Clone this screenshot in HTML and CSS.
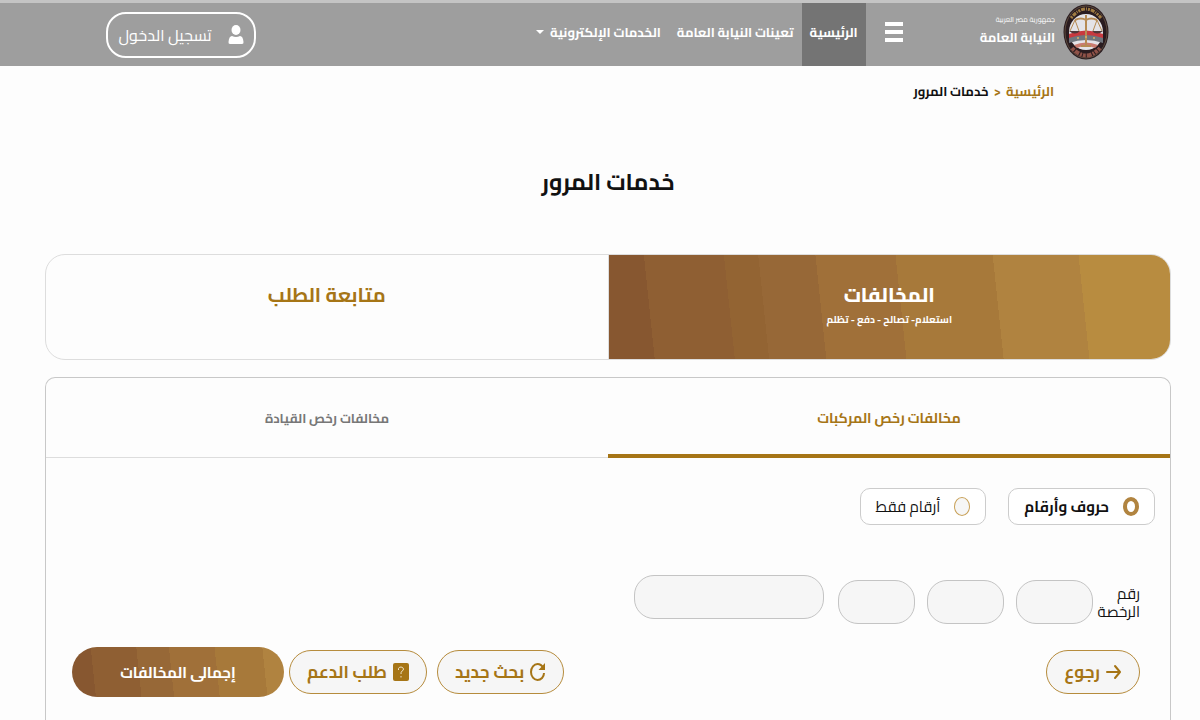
FILE: index.html
```html
<!DOCTYPE html>
<html lang="ar" dir="rtl">
<head>
	<meta charset="utf-8">
	<title>خدمات المرور</title>
	<link rel="stylesheet" href="styles.css">
</head>
<body>
	<!-- Header -->
	<header class="header">
		<a class="brand" href="#">
			<svg class="logo" viewBox="0 0 46 56" aria-hidden="true">
				<ellipse cx="23" cy="28" rx="22.5" ry="27.5" fill="#2a1c20"/>
				<ellipse cx="23" cy="28" rx="21" ry="26" fill="none" stroke="#5c4a3c"/>
				<path d="M8 14Q23-4 38 14" fill="none" stroke="#a07c42" stroke-width="3" stroke-dasharray="2 1 4 1 1 1"/>
				<path d="M9 44Q23 59 37 44" fill="none" stroke="#8f5248" stroke-width="4" stroke-dasharray="3 1 5 1 2 1"/>
				<ellipse cx="23" cy="28" rx="17" ry="18" fill="#e4e3e8"/>
				<path d="M6 30q17-7 34 0v5q-17-5-34 0z" fill="#c8393f"/>
				<path d="M6 34q17-6 34 0v5q-17-6-34 0z" fill="#70757d"/>
				<path d="M11 41q12-5 24 0l-3 3q-9-4-18 0z" fill="#c97b70"/>
				<g fill="none" stroke="#b68a53">
					<path d="M23 11v30M12 16q6-3 11 0 5-3 11 0" stroke-width="2"/>
					<path d="M12 16l-5 11m5-11l4 11M34 16l-4 11m4-11l5 11"/>
					<path d="M18 42h10" stroke-width="2"/>
				</g>
				<path d="M6 27h11q-5 5-11 0zM29 27h11q-6 5-11 0z" fill="#51383a"/>
				<circle cx="15" cy="34" r="1" fill="#d7b36b"/>
				<circle cx="23" cy="33" r="1" fill="#d7b36b"/>
				<circle cx="31" cy="34" r="1" fill="#d7b36b"/>
			</svg>
			<span class="brand-text">
				<small>جمهورية مصر العربية</small>
				<strong>النيابة العامة</strong>
			</span>
		</a>
		<button class="menu-btn" type="button" aria-label="القائمة"><span></span><span></span><span></span></button>
		<nav class="nav">
			<a class="nav-link active" href="#">الرئيسية</a>
			<a class="nav-link" href="#">تعينات النيابة العامة</a>
			<a class="nav-link" href="#">الخدمات الإلكترونية <i class="caret"></i></a>
		</nav>
		<button class="login-btn" type="button">
			<svg width="16" height="20" viewBox="0 0 16 20" fill="currentColor" aria-hidden="true"><ellipse cx="8" cy="5" rx="4.5" ry="5"/><path d="M4 11q4 2 8 0 3 0 3.500 6 .3 2-1.500 2H2Q.2 19 .5 17 1 11 4 11z"/></svg>
			<span>تسجيل الدخول</span>
		</button>
	</header>

	<!-- Breadcrumb -->
	<nav class="breadcrumb">
		<a href="#">الرئيسية</a>
		<span class="sep" dir="ltr">&gt;</span>
		<span>خدمات المرور</span>
	</nav>

	<main class="content">
		<h1>خدمات المرور</h1>

		<!-- Service Tabs -->
		<div class="services">
			<a class="service active" href="#">
				<strong>المخالفات</strong>
				<small>استعلام- تصالح - دفع - تظلم</small>
			</a>
			<a class="service" href="#"><strong>متابعة الطلب</strong></a>
		</div>

		<section class="panel">
			<div class="tabs">
				<a class="tab active" href="#">مخالفات رخص المركبات</a>
				<a class="tab" href="#">مخالفات رخص القيادة</a>
			</div>

			<!-- Plate Form -->
			<form class="plate-form">
				<div class="plate-types">
					<label class="plate-type checked"><input type="radio" name="plate" checked><span>حروف وأرقام</span></label>
					<label class="plate-type"><input type="radio" name="plate"><span>أرقام فقط</span></label>
				</div>
				<div class="plate">
					<label class="plate-label" for="letter1">رقم الرخصة</label>
					<div class="letters">
						<input class="field" type="text" id="letter1" maxlength="1">
						<input class="field" type="text" aria-label="الحرف الثاني" maxlength="1">
						<input class="field" type="text" aria-label="الحرف الثالث" maxlength="1">
					</div>
					<input class="field number" type="text" aria-label="الأرقام">
				</div>
				<div class="actions">
					<button class="btn back" type="button">
						<svg width="16" height="16" viewBox="0 0 16 16" fill="none" stroke="currentColor" stroke-width="2" stroke-linecap="round" stroke-linejoin="round" aria-hidden="true"><path d="M1 8h13M9 2l5 6-5 6"/></svg>
						<span>رجوع</span>
					</button>
					<button class="btn" type="reset">
						<svg width="16" height="18" viewBox="0 0 16 18" fill="none" stroke="currentColor" stroke-width="2" aria-hidden="true"><path d="M14 10c0 4-3 7-6.500 7S1 13.500 1 9s3-8 6.500-8C10 1 12 2.500 13.500 5"/><path d="M15 0v7H8.500z" fill="currentColor" stroke="none"/></svg>
						<span>بحث جديد</span>
					</button>
					<button class="btn" type="button">
						<svg width="16" height="18" viewBox="0 0 16 18" aria-hidden="true"><rect width="16" height="18" rx="2" fill="currentColor"/><path d="M5.500 7V5.500Q6 4 8 4t2.500 2Q10.500 7.500 8.500 8.500 8 9 8 11M8 13v1.500" fill="none" stroke="#f0e3c8" stroke-width="1"/></svg>
						<span>طلب الدعم</span>
					</button>
					<button class="btn total" type="submit">إجمالى المخالفات</button>
				</div>
			</form>
		</section>
	</main>
</body>
</html>
```
FILE: styles.css
```css
* {
	box-sizing: border-box;
}

body {
	margin: 0;
	background-color: #fdfdfd;
	color: #111;
	font-family: "Cairo", "DejaVu Sans Condensed", "DejaVu Sans", sans-serif;
	font-size: 16px;
}

a {
	color: inherit;
	text-decoration: none;
}

button, input {
	font-family: inherit;
	margin: 0;
}

button {
	cursor: pointer;
	white-space: nowrap;
}

/* Header */
.header {
	display: flex;
	align-items: center;
	height: 66px;
	padding: 0 91px 0 106px;
	border-top: 3px solid #c4c4c4;
	background-color: #9e9e9e;
	color: #fff;
}

.brand {
	display: flex;
	align-items: center;
	align-self: flex-start;
	gap: 8px;
	padding-top: 1px;
}

.logo {
	width: 46px;
	height: 56px;
}

.brand-text {
	display: flex;
	flex-direction: column;
	padding-bottom: 4px;
	white-space: nowrap;
}

.brand-text small {
	font-size: 7px;
	line-height: 14px;
}

.brand-text strong {
	font-size: 13px;
	line-height: 20px;
}

.menu-btn {
	display: flex;
	flex-direction: column;
	gap: 4px;
	width: 19px;
	margin-right: 77px;
	margin-left: 18px;
	padding: 0 0 5px;
	border: none;
	background: none;
}

.menu-btn span {
	width: 18px;
	height: 4px;
	background-color: #fff;
}

.nav {
	display: flex;
	align-self: stretch;
}

.nav-link {
	display: flex;
	align-items: center;
	gap: 6px;
	padding: 0 8px 6px;
	font-size: 13px;
	font-weight: bold;
	white-space: nowrap;
}

.nav-link.active {
	background-color: #747474;
}

.caret {
	border: 4px solid transparent;
	border-top-color: #fff;
	border-bottom: none;
}

.login-btn {
	display: flex;
	align-items: center;
	justify-content: center;
	gap: 16px;
	width: 150px;
	height: 46px;
	margin-right: auto;
	padding: 0;
	border: 2px solid #fff;
	border-radius: 20px;
	background: none;
	color: #fff;
	font-size: 16px;
}

/* Breadcrumb */
.breadcrumb {
	display: flex;
	gap: 5px;
	padding: 15px 146px 0;
	font-size: 13px;
	font-weight: bold;
	line-height: 20px;
}

.breadcrumb a, .sep {
	color: #a67516;
}

/* Content */
.content {
	padding: 0 29px 0 45px;
}

h1 {
	margin: 63px 0 54px;
	font-size: 23px;
	line-height: 36px;
	text-align: center;
}

.services {
	display: flex;
	height: 106px;
	border: 1px solid #ddd;
	border-radius: 20px;
	overflow: hidden;
}

.service {
	flex: 1;
	display: flex;
	flex-direction: column;
	align-items: center;
	padding-top: 26px;
	color: #a67516;
}

.service.active {
	border-left: 1px solid #ddd;
	background: linear-gradient(84deg, #875730 8%, #8f5f33 8% 22%, #936433 22% 28%, #976837 28% 38%, #a07039 38% 52%, #a7793a 52% 69%, #b08340 69% 84%, #b88c40 84%);
	background-clip: padding-box;
	color: #fff;
}

.service strong {
	font-size: 20px;
	line-height: 28px;
}

.service.active strong {
	font-weight: 800;
}

.service small {
	font-size: 10px;
	font-weight: bold;
	line-height: 22px;
}

.panel {
	margin-top: 17px;
	border: 1px solid #c8c8c8;
	border-bottom: none;
	border-radius: 10px 10px 0 0;
}

.tabs {
	display: flex;
	height: 80px;
	border-bottom: 1px solid #ddd;
}

.tab {
	flex: 1;
	height: 80px;
	font-size: 13px;
	font-weight: bold;
	line-height: 80px;
	text-align: center;
	color: #777;
}

.tab.active {
	border-bottom: 4px solid #a67516;
	color: #a67516;
	font-size: 14px;
}

/* Plate form */
.plate-form {
	padding: 30px 30px 23px 26px;
}

.plate-types {
	display: flex;
	gap: 22px;
	margin-right: -15px;
}

.plate-type {
	display: flex;
	align-items: center;
	gap: 14px;
	height: 37px;
	padding: 0 15px;
	border: 1px solid #ccc;
	border-radius: 10px;
	background-color: #fff;
	font-size: 15px;
	white-space: nowrap;
}

.plate-type.checked {
	font-weight: bold;
}

.plate-type input {
	appearance: none;
	width: 16px;
	height: 19px;
	border: 1px solid #c9a25a;
	border-radius: 50%;
	background-color: #f6f6f6;
}

.plate-type input:checked {
	border: 4px solid #b18440;
	background-color: #fff;
}

.plate {
	display: flex;
	align-items: flex-start;
	margin-top: 50px;
}

.plate-label {
	width: 44px;
	margin: 9px 0 0 3px;
	padding-top: 1px;
	font-size: 15px;
	line-height: 18px;
}

.letters {
	display: flex;
	gap: 12px;
	margin: 5px 0 0 14px;
}

.field {
	width: 77px;
	height: 44px;
	padding: 0 15px;
	border: 1px solid #c4c4c4;
	border-radius: 20px;
	background-color: #f6f6f6;
	font-size: 15px;
}

.field.number {
	width: 190px;
}

.actions {
	display: flex;
	align-items: center;
	margin-top: 23px;
}

.btn {
	display: flex;
	align-items: center;
	justify-content: center;
	gap: 6px;
	height: 44px;
	margin-left: 10px;
	padding: 0 17px;
	border: 1px solid #b68c3d;
	border-radius: 22px;
	background-color: #f6f6f6;
	color: #a67516;
	font-size: 17px;
	font-weight: bold;
}

.btn.back {
	margin-left: auto;
}

.btn.total {
	width: 212px;
	height: 50px;
	margin: 0 -5px 0 0;
	border: none;
	border-radius: 25px;
	background: linear-gradient(84deg, #875730 11%, #8f5f33 11% 32%, #976837 32% 47%, #a07039 47% 68%, #a7793a 68% 90%, #b08340 90%);
	color: #fff;
	font-size: 15px;
}
```
